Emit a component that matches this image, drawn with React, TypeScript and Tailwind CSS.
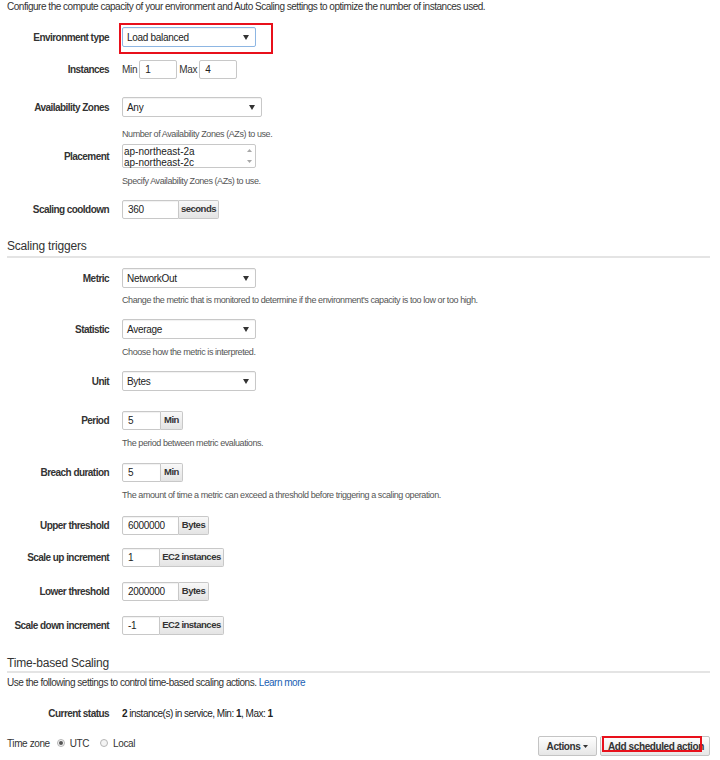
import React from 'react';

function Caret({ className = '' }: { className?: string }) {
  return (
    <svg width="6" height="5" viewBox="0 0 6 5" className={className}>
      <polygon points="0,0 6,0 3,5" fill="#333" />
    </svg>
  );
}

function Row({ label, className = '', children }: { label: string; className?: string; children: React.ReactNode }) {
  return (
    <div className={`flex items-center ${className}`}>
      <div className="w-[102px] shrink-0 mr-[13px] text-right font-bold text-[10px] tracking-[-0.55px] text-[#333] whitespace-nowrap">{label}</div>
      {children}
    </div>
  );
}

function Help({ className = '', children }: { className?: string; children: React.ReactNode }) {
  return <div className={`ml-[115px] text-[9px] leading-[14px] tracking-[-0.42px] text-[#555] ${className}`}>{children}</div>;
}

function Select({ value, width, focus = false }: { value: string; width: string; focus?: boolean }) {
  return (
    <div
      className={`${width} h-[20px] flex items-center justify-between pl-[4px] pr-[6px] bg-white rounded-[2px] border shadow-[inset_0_1px_1px_rgba(0,0,0,0.06)] text-[10px] tracking-[-0.3px] text-[#222] ${
        focus ? 'border-[#8db6e3]' : 'border-[#c8c8c8]'
      }`}
    >
      <span>{value}</span>
      <Caret />
    </div>
  );
}

function AddonInput({ value, inputW, addon, addonW }: { value: string; inputW: string; addon: string; addonW: string }) {
  return (
    <div className="flex h-[19px]">
      <div className={`${inputW} h-full flex items-center pl-[5px] bg-white border border-[#c8c8c8] rounded-l-[2px] text-[10px] tracking-[-0.3px] text-[#222] shadow-[inset_0_1px_1px_rgba(0,0,0,0.06)]`}>
        {value}
      </div>
      <div className={`${addonW} h-full flex items-center justify-center whitespace-nowrap bg-gradient-to-b from-[#f8f8f8] to-[#e4e4e4] border border-l-0 border-[#c8c8c8] rounded-r-[2px] font-bold text-[9.5px] tracking-[-0.5px] text-[#333]`}>
        {addon}
      </div>
    </div>
  );
}

function Radio({ checked }: { checked?: boolean }) {
  return (
    <span className="w-[8px] h-[8px] rounded-full border border-[#b5b5b5] bg-[#f4f4f4] flex items-center justify-center">
      {checked && <span className="w-[4px] h-[4px] rounded-full bg-[#555]" />}
    </span>
  );
}

export default function App() {
  return (
    <div className="w-[720px] h-[760px] bg-white overflow-hidden pl-[7px] pr-[10px] font-['Liberation_Sans',Arial,sans-serif] text-[#333]">
      <div className="text-[10px] leading-[14px] tracking-[-0.48px] text-[#333]">
        Configure the compute capacity of your environment and Auto Scaling settings to optimize the number of instances used.
      </div>

      <Row label="Environment type" className="mt-[13px]">
        <div className="relative">
          <Select value="Load balanced" width="w-[134px]" focus />
          <div className="absolute left-[-3px] top-[-4px] w-[154px] h-[31px] border-2 border-[#e8101b]" />
        </div>
      </Row>

      <Row label="Instances" className="mt-[13px]">
        <div className="flex items-center text-[10px] tracking-[-0.3px] text-[#333]">
          <span className="mr-[2px]">Min</span>
          <div className="w-[38px] h-[19px] flex items-center pl-[5px] border border-[#c8c8c8] rounded-[2px] text-[#222]">1</div>
          <span className="ml-[2px] mr-[2px]">Max</span>
          <div className="w-[38px] h-[19px] flex items-center pl-[5px] border border-[#c8c8c8] rounded-[2px] text-[#222]">4</div>
        </div>
      </Row>

      <Row label="Availability Zones" className="mt-[18px]">
        <Select value="Any" width="w-[140px]" />
      </Row>
      <Help className="mt-[10px]">Number of Availability Zones (AZs) to use.</Help>

      <Row label="Placement" className="mt-[3px]">
        <div className="w-[134px] h-[24px] flex border border-[#c8c8c8] rounded-[2px] bg-white">
          <div className="flex-1 pl-[1px] pt-[1px] text-[10px] leading-[11px] text-[#222]">
            <div>ap-northeast-2a</div>
            <div>ap-northeast-2c</div>
          </div>
          <div className="w-[12px] flex flex-col items-center justify-between py-[4px]">
            <svg width="5" height="3" viewBox="0 0 5 3">
              <polygon points="0,3 5,3 2.5,0" fill="#a8a8a8" />
            </svg>
            <svg width="5" height="3" viewBox="0 0 5 3">
              <polygon points="0,0 5,0 2.5,3" fill="#a8a8a8" />
            </svg>
          </div>
        </div>
      </Row>
      <Help className="mt-[6px]">Specify Availability Zones (AZs) to use.</Help>

      <Row label="Scaling cooldown" className="mt-[12px]">
        <AddonInput value="360" inputW="w-[57px]" addon="seconds" addonW="w-[40px]" />
      </Row>

      <div className="mt-[19px] text-[12px] leading-[16px] tracking-[-0.2px] text-[#333]">Scaling triggers</div>
      <div className="mt-[2px] h-[2px] bg-[#e4e4e4]" />

      <Row label="Metric" className="mt-[10px]">
        <Select value="NetworkOut" width="w-[134px]" />
      </Row>
      <Help className="mt-[5px]">Change the metric that is monitored to determine if the environment's capacity is too low or too high.</Help>

      <Row label="Statistic" className="mt-[12px]">
        <Select value="Average" width="w-[134px]" />
      </Row>
      <Help className="mt-[6px]">Choose how the metric is interpreted.</Help>

      <Row label="Unit" className="mt-[12px]">
        <Select value="Bytes" width="w-[134px]" />
      </Row>

      <Row label="Period" className="mt-[20px]">
        <AddonInput value="5" inputW="w-[39px]" addon="Min" addonW="w-[22px]" />
      </Row>
      <Help className="mt-[6px]">The period between metric evaluations.</Help>

      <Row label="Breach duration" className="mt-[13px]">
        <AddonInput value="5" inputW="w-[39px]" addon="Min" addonW="w-[22px]" />
      </Row>
      <Help className="mt-[6px]">The amount of time a metric can exceed a threshold before triggering a scaling operation.</Help>

      <Row label="Upper threshold" className="mt-[14px]">
        <AddonInput value="6000000" inputW="w-[57px]" addon="Bytes" addonW="w-[30px]" />
      </Row>
      <Row label="Scale up increment" className="mt-[13px]">
        <AddonInput value="1" inputW="w-[38px]" addon="EC2 instances" addonW="w-[64px]" />
      </Row>
      <Row label="Lower threshold" className="mt-[15px]">
        <AddonInput value="2000000" inputW="w-[57px]" addon="Bytes" addonW="w-[30px]" />
      </Row>
      <Row label="Scale down increment" className="mt-[15px]">
        <AddonInput value="-1" inputW="w-[38px]" addon="EC2 instances" addonW="w-[64px]" />
      </Row>

      <div className="mt-[20px] text-[12px] leading-[16px] tracking-[-0.2px] text-[#333]">Time-based Scaling</div>
      <div className="mt-0 h-[2px] bg-[#e4e4e4]" />
      <div className="mt-[3px] text-[10px] leading-[14px] tracking-[-0.48px] text-[#333]">
        Use the following settings to control time-based scaling actions. <span className="text-[#1a5fb4]">Learn more</span>
      </div>

      <Row label="Current status" className="mt-[16px]">
        <span className="text-[10px] tracking-[-0.5px] text-[#222]">
          <b>2</b> instance(s) in service, Min: <b>1</b>, Max: <b>1</b>
        </span>
      </Row>

      <div className="mt-[15px] flex items-start justify-between">
        <div className="h-[14px] flex items-center gap-[5px] text-[10px] tracking-[-0.4px] text-[#333]">
          <span className="mr-[2px]">Time zone</span>
          <Radio checked />
          <span className="mr-[6px]">UTC</span>
          <Radio />
          <span>Local</span>
        </div>
        <div className="flex items-center gap-[3px]">
          <button className="h-[20px] w-[59px] flex items-center justify-center gap-[3px] bg-gradient-to-b from-[#fefefe] to-[#e6e6e6] border border-[#c4c4c4] rounded-[2px] font-bold text-[10px] tracking-[-0.4px] text-[#333]">
            Actions
            <svg width="5" height="3" viewBox="0 0 5 3">
              <polygon points="0,0 5,0 2.5,3" fill="#333" />
            </svg>
          </button>
          <div className="relative">
            <button className="h-[20px] w-[110px] flex items-center pl-[7px] bg-gradient-to-b from-[#fefefe] to-[#e6e6e6] border border-[#c4c4c4] rounded-[2px] font-bold text-[10px] tracking-[-0.4px] text-[#333] whitespace-nowrap overflow-hidden">
              Add scheduled action
            </button>
            <div className="absolute left-[2px] top-0 w-[100px] h-[16px] border-2 border-[#e8101b]" />
          </div>
        </div>
      </div>
    </div>
  );
}
